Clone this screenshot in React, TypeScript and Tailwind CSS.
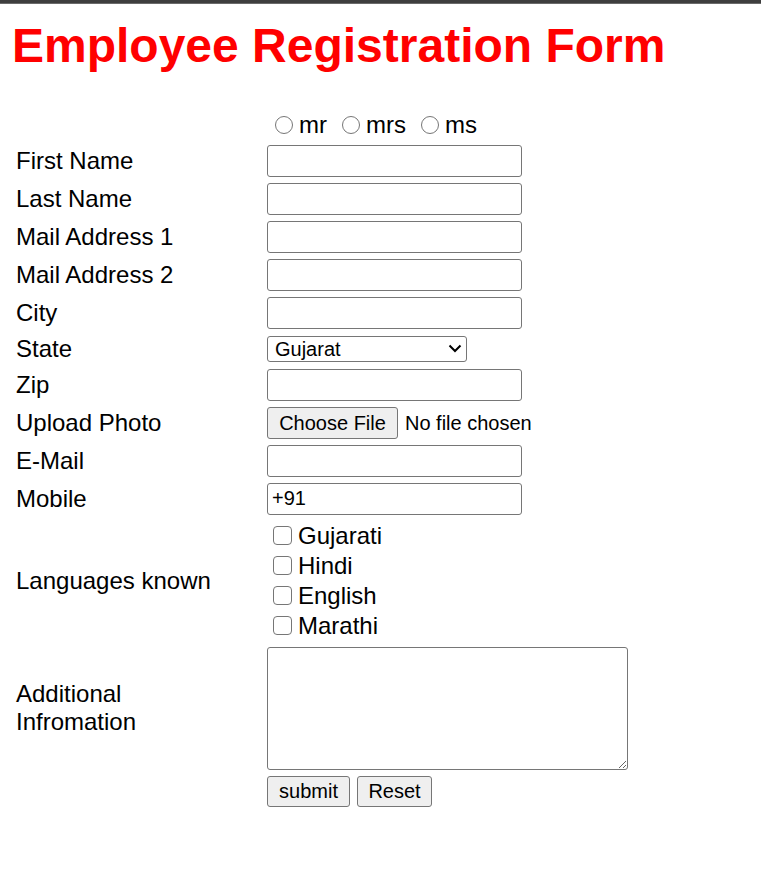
import React from "react";

const font = "font-['Liberation_Sans',Arial,Helvetica,sans-serif]";

function Row({ label, children, labelClass }: { label: React.ReactNode; children: React.ReactNode; labelClass?: string }) {
  return (
    <div className="flex items-center py-[1.5px]">
      <div className={"w-[251px] shrink-0 text-[24px] leading-[28px] text-black " + (labelClass ?? "")}>{label}</div>
      <div className="flex items-center">{children}</div>
    </div>
  );
}

function TextBox({ value }: { value?: string }) {
  return (
    <input
      type="text"
      defaultValue={value}
      className="h-[32px] w-[255px] rounded-[3px] border border-[#767676] bg-white px-[4px] text-[20px] text-black outline-none"
    />
  );
}

function Radio({ label }: { label: string }) {
  return (
    <label className="flex items-center">
      <input type="radio" name="title" className="ml-[8px] h-[18px] w-[18px] appearance-none rounded-full border border-[#767676] bg-white" />
      <span className="ml-[6px] text-[24px] leading-[28px]">{label}</span>
    </label>
  );
}

function Check({ label }: { label: string }) {
  return (
    <label className="flex h-[30px] items-center">
      <input type="checkbox" className="ml-[6px] h-[19px] w-[19px] appearance-none rounded-[4px] border border-[#767676] bg-white" />
      <span className="ml-[6px] text-[24px] leading-[28px]">{label}</span>
    </label>
  );
}

function GrayButton({ children, w }: { children: React.ReactNode; w: string }) {
  return (
    <button
      type="button"
      className={"flex h-[31px] items-center justify-center rounded-[3px] border border-[#767676] bg-[#efefef] text-[20px] text-black " + w}
    >
      {children}
    </button>
  );
}

export default function App() {
  return (
    <div className={"min-h-[875px] bg-white text-black " + font}>
      <div className="h-[3px] bg-[#3e3e3e]" />
      <div className="h-[1px] bg-[#6a6a6a]" />

      <h1 className="ml-[12px] mt-[14px] text-[48px] font-bold leading-[55px] text-[#ff0000]">Employee Registration Form</h1>

      <form className="mt-[36px] flex flex-col gap-[3px] pl-[16px]">
        <Row label="">
          <div className="flex items-center gap-[7px]">
            <Radio label="mr" />
            <Radio label="mrs" />
            <Radio label="ms" />
          </div>
        </Row>
        <Row label="First Name"><TextBox /></Row>
        <Row label="Last Name"><TextBox /></Row>
        <Row label="Mail Address 1"><TextBox /></Row>
        <Row label="Mail Address 2"><TextBox /></Row>
        <Row label="City"><TextBox /></Row>
        <Row label="State">
          <div className="flex h-[26px] w-[200px] items-center justify-between rounded-[3px] border border-[#767676] bg-white pl-[7px] pr-[4px] text-[20px]">
            <span>Gujarat</span>
            <svg width="14" height="9" viewBox="0 0 14 9" fill="none">
              <path d="M1.5 1.5L7 7L12.5 1.5" stroke="#000" strokeWidth="2" />
            </svg>
          </div>
        </Row>
        <Row label="Zip"><TextBox /></Row>
        <Row label="Upload Photo">
          <div className="flex items-center">
            <span className="flex h-[32px] w-[131px] items-center justify-center rounded-[3px] border border-[#767676] bg-[#efefef] text-[20px]">
              Choose File
            </span>
            <span className="ml-[7px] text-[20px]">No file chosen</span>
          </div>
        </Row>
        <Row label="E-Mail"><TextBox /></Row>
        <Row label="Mobile"><TextBox value="+91" /></Row>
        <Row label="Languages known">
          <div className="flex flex-col">
            <Check label="Gujarati" />
            <Check label="Hindi" />
            <Check label="English" />
            <Check label="Marathi" />
          </div>
        </Row>
        <Row label={<>Additional<br />Infromation</>}>
          <textarea className="block h-[123px] w-[361px] resize rounded-[3px] border border-[#767676] bg-white outline-none" />
        </Row>
        <Row label="">
          <div className="flex items-center gap-[7px]">
            <GrayButton w="w-[83px]">submit</GrayButton>
            <GrayButton w="w-[75px]">Reset</GrayButton>
          </div>
        </Row>
      </form>
    </div>
  );
}
